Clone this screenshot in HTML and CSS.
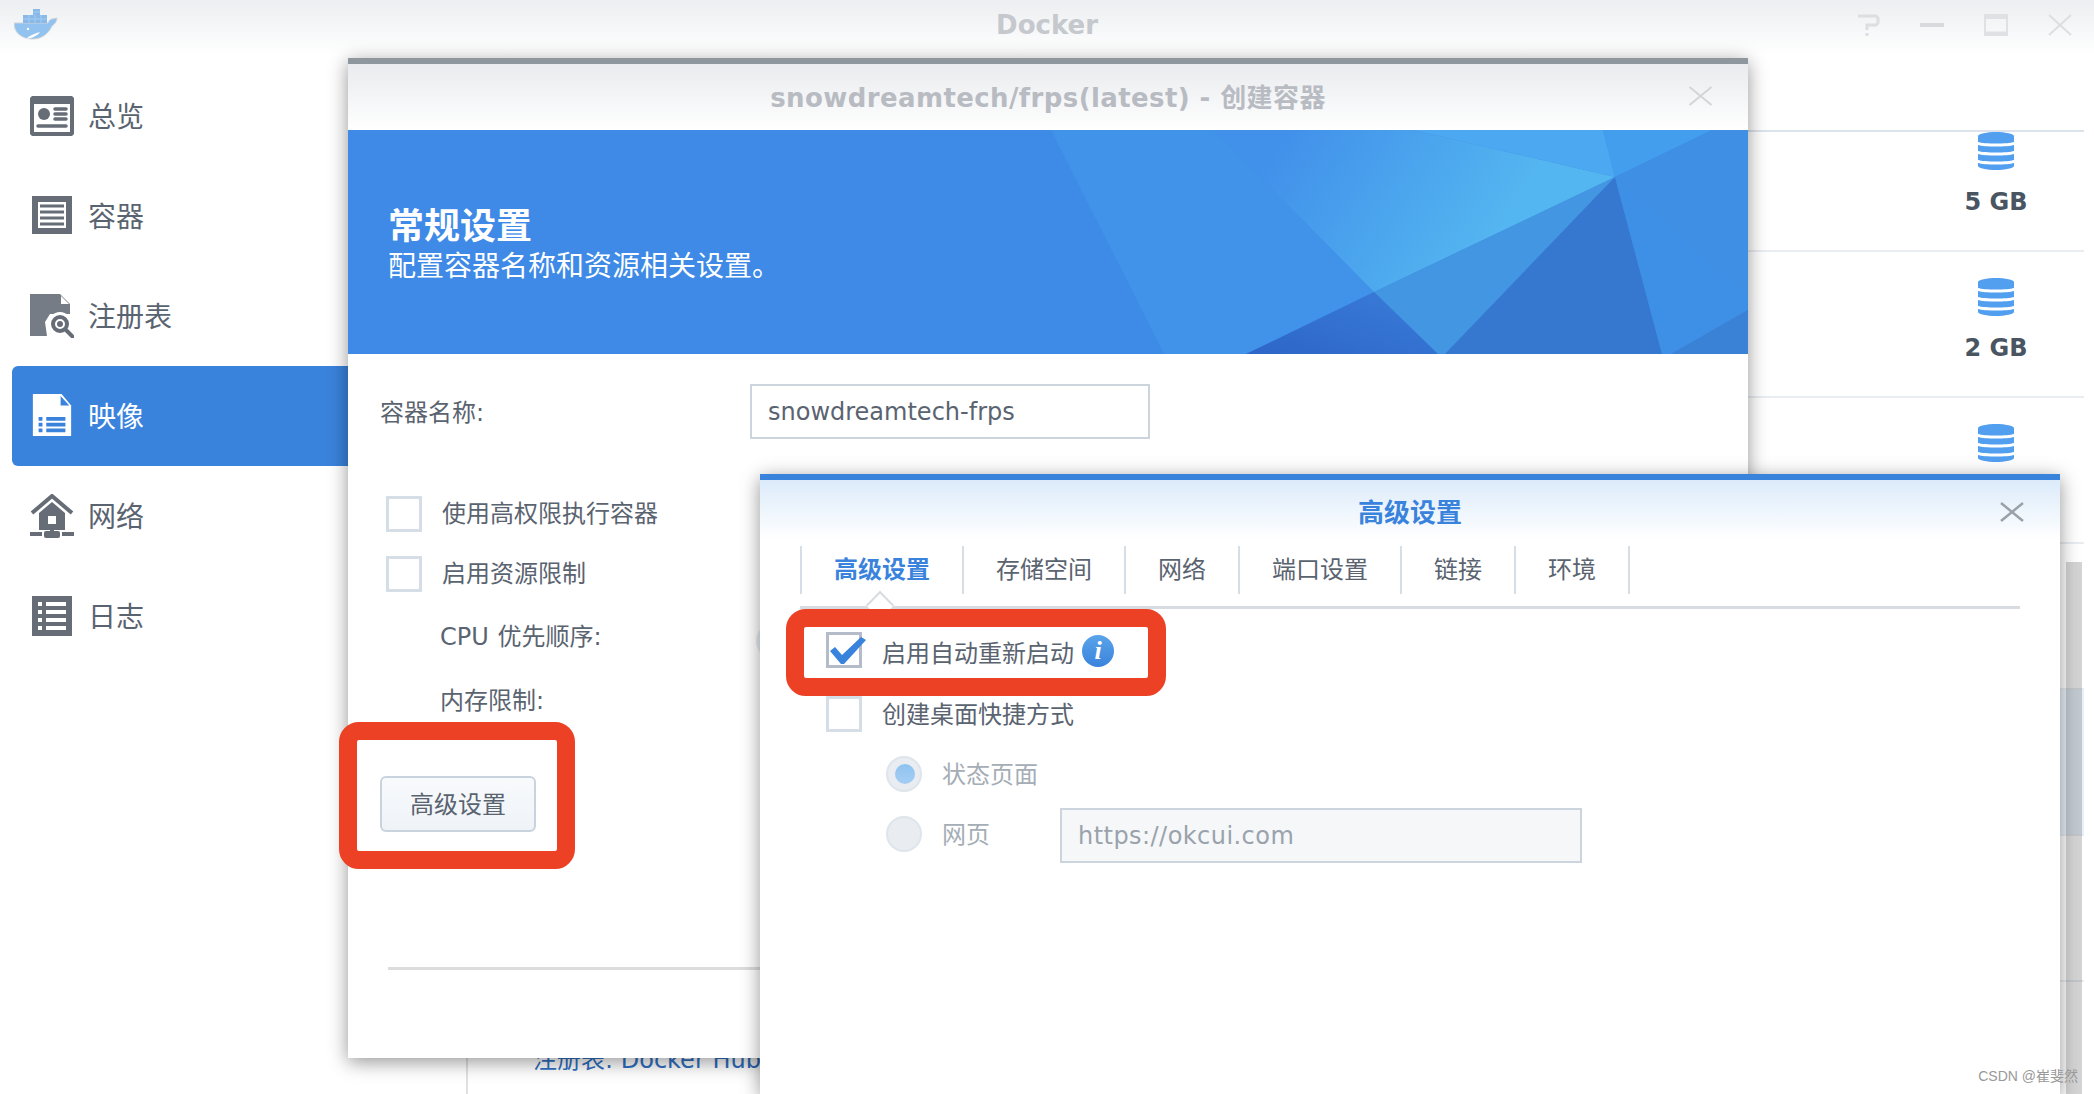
FILE: index.html
```html
<!DOCTYPE html>
<html lang="zh-CN">
<head>
  <meta charset="UTF-8">
  <title>Docker</title>
  <link rel="stylesheet" href="styles.css">
</head>
<body>

  <div class="app">
    <div class="titlebar">
      <svg class="whale" viewBox="0 0 44 32">
        <path d="M0 15h34c1-2 2-4 4-4l5-1c0 3-2 6-5 8-3 7-10 13-19 13C8 31 0 25 0 15z" fill="#92c3f0" stroke="#cfd4d9" stroke-width="1"/>
        <path d="M9 7h10V1h7v6h7v8H9z" fill="#8ab9e8"/>
        <path d="M9 11h24M15 7v8M21 7v8M27 7v8M19 4h7" stroke="#a2ccf2" stroke-width="1" fill="none"/>
        <circle cx="14" cy="21" r="1.2" fill="#fff"/>
        <path d="M12 31c6-1 11-3 14-7-4 1-10 3-14 7z" fill="#fff"/>
      </svg>
      <div class="app-title">Docker</div>
      <div class="win-btns">
        <svg viewBox="0 0 24 22"><path d="M2 2h18l2 2v5l-2 2H11v5M11 19v3" fill="none" stroke="#dcdee1" stroke-width="3"/></svg>
        <svg viewBox="0 0 24 22"><path d="M0 11h24" stroke="#d8dadd" stroke-width="4"/></svg>
        <svg viewBox="0 0 24 22"><path d="M1 1h22v20H1z" fill="none" stroke="#dfe1e4" stroke-width="2"/><path d="M1 3h22" stroke="#dfe1e4" stroke-width="4"/><path d="M1 19h22" stroke="#dfe1e4" stroke-width="3"/></svg>
        <svg viewBox="0 0 24 22"><path d="M1 1l22 20M23 1L1 21" stroke="#dcdee1" stroke-width="2"/></svg>
      </div>
    </div>

    <div class="app-body">
      <ul class="sidebar">
        <li class="nav-item">
          <svg class="nav-icon" viewBox="0 0 44 40">
            <path fill-rule="evenodd" d="M2 0h40l2 2v36l-2 2H2l-2-2V2zM4 8v28h36V8z" fill="#666d77"/>
            <circle cx="14" cy="18" r="6" fill="#666d77"/>
            <path d="M25 13h11M25 18h11M25 23h11M8 30h28" stroke="#666d77" stroke-width="3.5" stroke-linecap="round"/>
          </svg>
          <span>总览</span>
        </li>
        <li class="nav-item">
          <svg class="nav-icon" viewBox="0 0 44 40">
            <path d="M2 0h40v6H2zM2 32h40v6H2zM2 6h6v26H2zM36 6h6v26h-6z" fill="#666d77"/>
            <path d="M10 10h24M10 16h24M10 22h24M10 28h24" stroke="#666d77" stroke-width="3" fill="none"/>
          </svg>
          <span>容器</span>
        </li>
        <li class="nav-item">
          <svg class="nav-icon" viewBox="0 0 44 44">
            <path d="M0 0h30l10 10v10H20l-5 8 2 14H0z" fill="#757c86"/>
            <path d="M31 2v8h8z" fill="#fff"/>
            <circle cx="30" cy="30" r="10" fill="#fff" stroke="#fff" stroke-width="4"/>
            <circle cx="30" cy="30" r="7" fill="#fff" stroke="#666d77" stroke-width="4"/>
            <circle cx="30" cy="30" r="3" fill="#666d77"/>
            <path d="M36 36l7 7" stroke="#666d77" stroke-width="4" stroke-linecap="round"/>
          </svg>
          <span>注册表</span>
        </li>
        <li class="nav-item active">
          <svg class="nav-icon" viewBox="0 0 44 46">
            <path d="M2 0h30l10 12v32H2z" fill="#fff"/>
            <path d="M31 2v10h9z" fill="#3a83dc"/>
            <path d="M8 24h4v4H8zM8 30h4v4H8zM8 36h4v4H8zM16 24h20v4H16zM16 30h20v4H16zM16 36h20v4H16z" fill="#3a83dc"/>
          </svg>
          <span>映像</span>
        </li>
        <li class="nav-item">
          <svg class="nav-icon" viewBox="0 0 44 44">
            <path d="M2 19L22 2l20 17" fill="none" stroke="#666d77" stroke-width="4"/>
            <path fill-rule="evenodd" d="M22 8L9 19v17h26V19zM18 22h8v8h-8z" fill="#666d77"/>
            <path d="M20 36h4v2h-4z" fill="#666d77"/>
            <rect x="14" y="37" width="16" height="7" rx="2" fill="#666d77"/>
            <path d="M0 38h12v4H0zM32 38h12v4H32z" fill="#666d77"/>
          </svg>
          <span>网络</span>
        </li>
        <li class="nav-item">
          <svg class="nav-icon" viewBox="0 0 44 40">
            <path d="M2 0h40v40H2z" fill="#666d77"/>
            <path d="M8 6h4v4H8zM8 14h4v4H8zM8 22h4v4H8zM8 30h4v4H8zM16 6h20v4H16zM16 14h20v4H16zM16 22h20v4H16zM16 30h20v4H16z" fill="#fff"/>
          </svg>
          <span>日志</span>
        </li>
      </ul>

      <div class="content">
        <div class="row first">
          <div class="row-name"></div>
          <div class="row-size">
            <svg class="db" viewBox="0 0 36 38"><use href="#db-shape"/></svg>
            <div>5 GB</div>
          </div>
        </div>
        <div class="row">
          <div class="row-name"></div>
          <div class="row-size">
            <svg class="db" viewBox="0 0 36 38"><use href="#db-shape"/></svg>
            <div>2 GB</div>
          </div>
        </div>
        <div class="row">
          <div class="row-name"></div>
          <div class="row-size">
            <svg class="db" viewBox="0 0 36 38"><use href="#db-shape"/></svg>
          </div>
        </div>
        <div class="row"></div>
        <div class="row selected"></div>
        <div class="row"></div>
        <div class="row">
          <div class="row-name registry">注册表: Docker Hub</div>
        </div>
        <div class="scrollbar"></div>
      </div>
    </div>
  </div>

  <svg class="defs" width="0" height="0">
    <defs>
      <g id="db-shape" fill="#529ff0">
        <path d="M0 4c0-2 9-4 18-4s18 2 18 4v6c-6 2-30 2-36 0z"/>
        <path d="M0 13c6 2 30 2 36 0v6c-6 2-30 2-36 0z"/>
        <path d="M0 22c6 2 30 2 36 0v6c-6 2-30 2-36 0z"/>
        <path d="M0 31c6 2 30 2 36 0v3c0 2-9 4-18 4S0 36 0 34z"/>
      </g>
    </defs>
  </svg>

  <!-- create container window -->
  <div class="dialog dialog-main">
    <div class="dialog-head">
      <div class="dialog-title">snowdreamtech/frps(latest) - 创建容器</div>
      <svg class="dialog-close" viewBox="0 0 24 20"><path d="M1 1l22 18M23 1L1 19" stroke="#d3d5d8" stroke-width="2"/></svg>
    </div>
    <div class="banner">
      <svg class="banner-art" viewBox="0 0 1400 224" preserveAspectRatio="none">
        <defs>
          <linearGradient id="glow" gradientUnits="userSpaceOnUse" x1="930" y1="10" x2="1130" y2="140">
            <stop offset="0" stop-color="#4190ea"/>
            <stop offset="1" stop-color="#54b6f0"/>
          </linearGradient>
          <linearGradient id="deep" x1="0" y1="1" x2="1" y2="0">
            <stop offset="0" stop-color="#2d66c8"/>
            <stop offset="1" stop-color="#3a7cd8"/>
          </linearGradient>
        </defs>
        <path d="M572 0H703L816 224H572z" fill="#3e8be7"/>
        <path d="M703 0H866L1026 162L898 224H816z" fill="#4192e9"/>
        <path d="M866 0H1065L1267 47L1026 162z" fill="url(#glow)"/>
        <path d="M1065 0H1255L1267 47z" fill="#4ca8f0"/>
        <path d="M1255 0H1364L1267 47z" fill="#439eee"/>
        <path d="M1364 0H1400V167L1267 47z" fill="#3f90e4"/>
        <path d="M1026 162L1267 47L1097 224H1090z" fill="#4296e2"/>
        <path d="M1026 162L1090 224H898z" fill="url(#deep)"/>
        <path d="M1267 47L1314 224H1097z" fill="#3678d0"/>
        <path d="M1267 47L1400 167V180L1323 224H1314z" fill="#3e90e6"/>
        <path d="M1400 180V224H1323z" fill="#3a82d6"/>
      </svg>
      <div class="banner-title">常规设置</div>
      <div class="banner-sub">配置容器名称和资源相关设置。</div>
    </div>
    <div class="dialog-body">
      <div class="field">
        <label class="field-label">容器名称:</label>
        <input class="text-input" type="text" value="snowdreamtech-frps">
      </div>
      <div class="check-row"><span class="check"></span><span class="check-text">使用高权限执行容器</span></div>
      <div class="check-row second"><span class="check"></span><span class="check-text">启用资源限制</span></div>
      <div class="sub-label cpu">CPU 优先顺序:</div>
      <div class="sub-label mem">内存限制:</div>
      <button class="btn" type="button">高级设置</button>
      <div class="foot-line"></div>
    </div>
    <div class="radio-stub"></div>
  </div>

  <!-- advanced settings window -->
  <div class="dialog dialog-adv">
    <div class="adv-head">
      <div class="adv-title">高级设置</div>
      <svg class="adv-close" viewBox="0 0 24 20"><path d="M1 1l22 18M23 1L1 19" stroke="#9aa1a9" stroke-width="2.5"/></svg>
    </div>
    <div class="tabs">
      <div class="tab active">高级设置</div>
      <div class="tab">存储空间</div>
      <div class="tab">网络</div>
      <div class="tab">端口设置</div>
      <div class="tab">链接</div>
      <div class="tab">环境</div>
    </div>
    <div class="adv-body">
      <div class="adv-row restart">
        <span class="check checked">
          <svg class="tick" viewBox="0 0 36 27"><path d="M0 14l5-4 7 8L31 0l5 3-22 24h-3z" fill="#3a83dc"/></svg>
        </span>
        <span class="adv-text">启用自动重新启动</span>
        <span class="info">i</span>
      </div>
      <div class="adv-row shortcut"><span class="check"></span><span class="adv-text">创建桌面快捷方式</span></div>
      <div class="radio-row">
        <span class="radio on"></span><span class="radio-text">状态页面</span>
      </div>
      <div class="radio-row web">
        <span class="radio"></span><span class="radio-text wide">网页</span>
        <input class="text-input url" type="text" value="https://okcui.com" disabled>
      </div>
    </div>
  </div>

  <!-- red annotation boxes -->
  <div class="mark mark-btn"></div>
  <div class="mark mark-check"></div>

  <div class="watermark">CSDN @崔斐然</div>

</body>
</html>
```

FILE: styles.css
```css
* {
  box-sizing: border-box;
}

html, body {
  margin: 0;
  height: 100%;
  overflow: hidden;
}

body {
  font-family: "DejaVu Sans", "Noto Sans CJK SC", sans-serif;
  font-size: 24px;
  color: #5a6370;
  background: white;
}

.defs {
  position: absolute;
}

/* app window */
.app {
  height: 1094px;
  display: flex;
  flex-direction: column;
}

.titlebar {
  height: 55px;
  display: flex;
  align-items: center;
  justify-content: center;
  position: relative;
  background: linear-gradient(#eceef1, #ffffff);
}

.whale {
  position: absolute;
  left: 14px;
  top: 8px;
  width: 44px;
  height: 32px;
}

.app-title {
  font-size: 26px;
  font-weight: bold;
  color: #c5c8cc;
  margin-top: -6px;
}

.win-btns {
  position: absolute;
  top: 14px;
  right: 22px;
  display: flex;
  gap: 40px;
}

.win-btns svg {
  width: 24px;
  height: 22px;
}

.app-body {
  flex: 1;
  display: flex;
  min-height: 0;
}

.sidebar {
  width: 466px;
  margin: 0;
  padding: 11px 117px 0 12px;
  list-style: none;
}

.nav-item {
  height: 100px;
  padding-left: 18px;
  display: flex;
  align-items: center;
  gap: 14px;
  font-size: 28px;
  border-radius: 6px 0 0 6px;
}

.nav-item span {
  margin-top: -3px;
}

.nav-item.active {
  background: #3a83dc;
  color: white;
}

.nav-icon {
  width: 44px;
  height: 44px;
}

/* rows behind the dialogs */
.content {
  flex: 1;
  position: relative;
  margin-top: 20px;
  padding: 55px 10px 0 0;
  border-left: 2px solid #dfe1e3;
  overflow: hidden;
}

.row {
  height: 146px;
  border-top: 2px solid #e9edf2;
  display: flex;
  justify-content: space-between;
}

.row.first {
  height: 120px;
  border-top-color: #dde3ec;
}

.row.selected {
  background: #e8f1fb;
}

.row-name {
  padding-left: 65px;
}

.registry {
  padding-top: 58px;
  color: #2f6fc2;
}

.row-size {
  width: 176px;
  margin-left: auto;
  padding-top: 26px;
  text-align: center;
  font-weight: bold;
  color: #4a5562;
}

.row.first .row-size {
  padding-top: 0;
}

.db {
  display: block;
  width: 36px;
  height: 38px;
  margin: 0 auto 18px;
}

.scrollbar {
  position: absolute;
  top: 487px;
  right: 12px;
  bottom: 0;
  width: 16px;
  background: rgba(0, 0, 0, 0.17);
}

/* dialogs */
.dialog {
  position: absolute;
  background: white;
  box-shadow: 0 4px 18px rgba(0, 0, 0, 0.42);
}

.dialog-main {
  left: 348px;
  top: 58px;
  width: 1400px;
  height: 1000px;
  border-top: 6px solid #8e969e;
}

.dialog-head {
  height: 66px;
  display: flex;
  align-items: center;
  justify-content: center;
  position: relative;
  background: linear-gradient(#e9ebee, #ffffff);
}

.dialog-title {
  font-size: 26px;
  font-weight: bold;
  letter-spacing: 0.4px;
  color: #b8bcc2;
  margin-top: -3px;
}

.dialog-close {
  position: absolute;
  right: 35px;
  top: 22px;
  width: 25px;
  height: 20px;
}

.banner {
  height: 224px;
  position: relative;
  padding: 75px 0 0 40px;
  background: #3e8ae6;
  color: white;
}

.banner-art {
  position: absolute;
  left: 0;
  top: 0;
  width: 100%;
  height: 100%;
}

.banner-title {
  position: relative;
  font-size: 36px;
  font-weight: bold;
  line-height: 44px;
}

.banner-sub {
  position: relative;
  font-size: 28px;
  line-height: 36px;
}

.dialog-body {
  padding: 30px 32px 0;
}

.field {
  display: flex;
  align-items: center;
  height: 55px;
}

.field-label {
  width: 370px;
  margin-top: -3px;
  word-spacing: 1px;
}

.text-input {
  font: inherit;
  color: inherit;
  height: 55px;
  padding: 0 16px;
  border: 2px solid #ccd4de;
  background: white;
  outline: none;
  width: 400px;
}

.check-row {
  margin: 57px 0 0 6px;
  display: flex;
  align-items: center;
  gap: 20px;
  height: 36px;
}

.check-row.second {
  margin-top: 24px;
}

.check-text {
  margin-top: -5px;
}

.check {
  width: 36px;
  height: 36px;
  flex: none;
  border: 3px solid #d5dde6;
  position: relative;
}

.check.checked {
  border-color: #b3bcc8;
}

.tick {
  position: absolute;
  left: 1px;
  top: 2px;
  width: 36px;
  height: 27px;
}

.sub-label {
  margin-left: 60px;
  line-height: 36px;
  word-spacing: 1px;
}

.sub-label.cpu {
  margin-top: 27px;
}

.sub-label.mem {
  margin-top: 28px;
}

.btn {
  display: block;
  width: 156px;
  height: 56px;
  margin-top: 57px;
  padding-bottom: 5px;
  font: inherit;
  color: inherit;
  background: linear-gradient(#f8fafc, #eff3f8);
  border: 2px solid #c8d3de;
  border-radius: 6px;
}

.foot-line {
  margin: 135px -32px 0 8px;
  height: 3px;
  background: #dcdcdc;
}

.radio-stub {
  position: absolute;
  left: 408px;
  top: 559px;
  width: 36px;
  height: 36px;
  border-radius: 50%;
  background: #e9edf2;
}

.dialog-adv {
  left: 760px;
  top: 474px;
  width: 1300px;
  height: 620px;
  border-top: 6px solid #3a83dc;
}

.adv-head {
  height: 60px;
  display: flex;
  align-items: center;
  justify-content: center;
  position: relative;
  background: linear-gradient(#dcebfa, #ffffff);
}

.adv-title {
  font-size: 26px;
  font-weight: bold;
  color: #3a83dc;
  margin-top: 1px;
}

.adv-close {
  position: absolute;
  right: 36px;
  top: 22px;
  width: 24px;
  height: 20px;
}

.tabs {
  margin: 6px 40px 0;
  height: 63px;
  padding-bottom: 12px;
  display: flex;
  border-bottom: 3px solid #d8dbdf;
  position: relative;
}

.tab {
  padding: 0 32px;
  line-height: 48px;
  border-right: 2px solid #d5dde6;
  color: #5a6370;
}

.tab:first-child {
  border-left: 2px solid #d5dde6;
}

.tab.active {
  color: #3a83dc;
  font-weight: bold;
  position: relative;
}

.tab.active::after {
  content: "";
  position: absolute;
  left: 68px;
  bottom: -21px;
  width: 18px;
  height: 18px;
  border-top: 2px solid #d8dbdf;
  border-left: 2px solid #d8dbdf;
  background: white;
  transform: rotate(45deg);
}

.adv-body {
  padding: 23px 0 0 66px;
}

.adv-row {
  display: flex;
  align-items: center;
  gap: 20px;
  height: 36px;
  margin-bottom: 28px;
}

.restart .adv-text {
  margin-top: 3px;
}

.shortcut .adv-text {
  margin-top: -4px;
}

.info {
  width: 32px;
  height: 32px;
  margin: 2px 0 0 -12px;
  border-radius: 50%;
  background: linear-gradient(#5aa4ea, #3a83dc);
  color: white;
  font-family: "Liberation Serif", serif;
  font-style: italic;
  font-weight: bold;
  font-size: 26px;
  line-height: 32px;
  text-align: center;
}

.radio-row {
  display: flex;
  align-items: center;
  gap: 20px;
  height: 36px;
  margin: -4px 0 0 60px;
  color: #a5adb6;
}

.radio-row.web {
  margin-top: 24px;
}

.radio {
  width: 36px;
  height: 36px;
  border-radius: 50%;
  background: #e9edf2;
  border: 2px solid #dfe5ec;
  position: relative;
}

.radio.on::after {
  content: "";
  position: absolute;
  left: 7px;
  top: 6px;
  width: 20px;
  height: 20px;
  border-radius: 50%;
  background: linear-gradient(#8dc3f0, #a6cdf2);
}

.radio-text {
  margin-top: -4px;
}

.radio-text.wide {
  width: 98px;
}

.text-input.url {
  width: 522px;
  margin-top: 3px;
  letter-spacing: 0.45px;
  background: #f5f7f9;
  color: #9aa2ac;
}

/* annotations */
.mark {
  position: absolute;
  border: 18px solid #ec4125;
  border-radius: 20px;
}

.mark-btn {
  left: 339px;
  top: 722px;
  width: 236px;
  height: 147px;
}

.mark-check {
  left: 786px;
  top: 609px;
  width: 380px;
  height: 87px;
}

.watermark {
  position: absolute;
  right: 16px;
  bottom: 9px;
  font-family: "Liberation Sans", "Noto Sans CJK SC", sans-serif;
  font-size: 14px;
  color: #999;
}
```
